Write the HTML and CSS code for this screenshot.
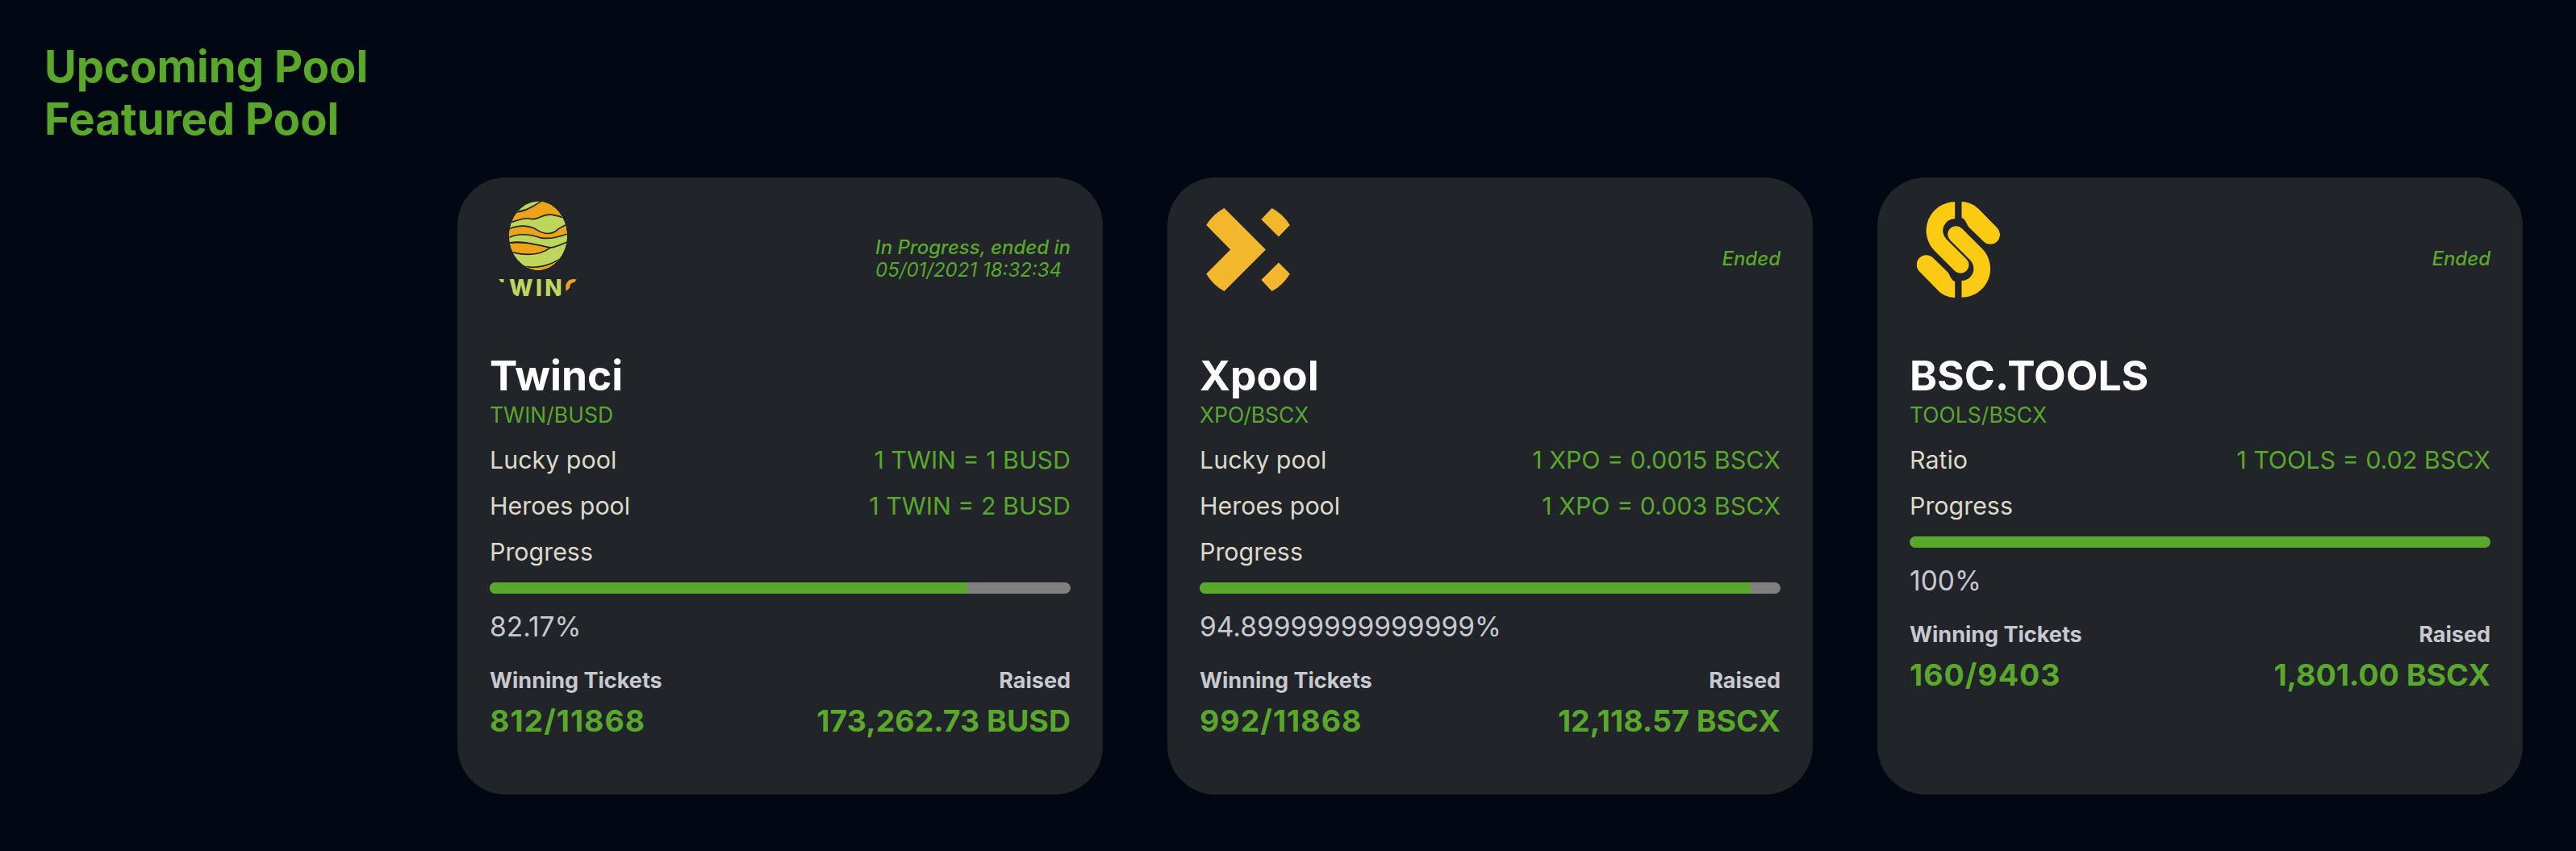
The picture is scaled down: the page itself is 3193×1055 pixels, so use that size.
FILE: index.html
```html
<!DOCTYPE html>
<html lang="en">
<head>
<meta charset="utf-8">
<title>Pools</title>
<link rel="stylesheet" href="styles.css">
</head>
<body>
<main class="page">
  <h1 class="heading">Upcoming Pool</h1>
  <h1 class="heading">Featured Pool</h1>
  <section class="cards">
    <article class="card">
      <header class="card-head">
        <svg class="logo logo-twin" viewBox="50 35 300 365" aria-hidden="true">
          <defs>
            <clipPath id="egg"><ellipse cx="200" cy="170" rx="107" ry="127"/></clipPath>
            <clipPath id="word"><ellipse cx="199" cy="215" rx="178" ry="200"/></clipPath>
          </defs>
          <g clip-path="url(#egg)" stroke="#212429" stroke-width="5">
            <rect x="80" y="30" width="240" height="300" fill="#bdd65b" stroke="none"/>
            <path class="o" d="M100 84C150 82 175 65 215 40L330 40V330H80V84Z"/>
            <path class="g" d="M80 126C120 115 150 100 175 108C200 112 215 88 250 92C270 95 290 100 320 112V330H80Z"/>
            <path class="o" d="M80 150C110 135 150 125 190 145C220 165 250 170 275 145L320 120V330H80Z"/>
            <path class="g" d="M80 185C120 155 170 165 210 178C250 185 290 170 320 160V330H80Z"/>
            <path class="g" d="M80 200C130 185 180 200 245 215C280 210 300 195 320 188V330H80Z"/>
            <path class="o" d="M80 200C130 188 180 200 245 215C210 242 160 245 105 232L80 225Z"/>
            <path class="o" d="M130 280C190 298 250 280 290 250V330H130Z"/>
          </g>
          <g clip-path="url(#word)">
            <text class="word" x="18" y="394">T<tspan x="92">WIN</tspan><tspan class="wordc">C</tspan>I</text>
          </g>
        </svg>
        <p class="status">In Progress, ended in<br><span class="status-date">05/01/2021 18:32:34</span></p>
      </header>
      <h2 class="name">Twinci</h2>
      <p class="pair">TWIN/BUSD</p>
      <div class="row"><span class="label">Lucky pool</span><span class="value">1 TWIN = 1 BUSD</span></div>
      <div class="row"><span class="label">Heroes pool</span><span class="value">1 TWIN = 2 BUSD</span></div>
      <div class="row"><span class="label">Progress</span></div>
      <div class="bar"><div class="fill" style="width:82.17%"></div></div>
      <p class="percent">82.17%</p>
      <div class="stat-labels"><span>Winning Tickets</span><span>Raised</span></div>
      <div class="stat-values"><span>812/11868</span><span>173,262.73 BUSD</span></div>
    </article>
    <article class="card">
      <header class="card-head">
        <svg class="logo logo-xpo" viewBox="75 55 312 310" aria-hidden="true">
          <path d="M75 118Q100 78 142 55L297 210L142 365Q100 342 75 300L165 210Z"/>
          <path d="M280 97L320 55Q362 78 387 118L345 162Z"/>
          <path d="M280 323L345 258L387 300Q362 342 320 365Z"/>
        </svg>
        <p class="status">Ended</p>
      </header>
      <h2 class="name">Xpool</h2>
      <p class="pair">XPO/BSCX</p>
      <div class="row"><span class="label">Lucky pool</span><span class="value">1 XPO = 0.0015 BSCX</span></div>
      <div class="row"><span class="label">Heroes pool</span><span class="value">1 XPO = 0.003 BSCX</span></div>
      <div class="row"><span class="label">Progress</span></div>
      <div class="bar"><div class="fill" style="width:94.9%"></div></div>
      <p class="percent">94.89999999999999%</p>
      <div class="stat-labels"><span>Winning Tickets</span><span>Raised</span></div>
      <div class="stat-values"><span>992/11868</span><span>12,118.57 BSCX</span></div>
    </article>
    <article class="card">
      <header class="card-head">
        <svg class="logo logo-bsc" viewBox="78 45 310 358" aria-hidden="true">
          <path d="M220 46A107 107 0 0 0 144.3 228.7L219 303A31 31 0 0 0 263 259L188.2 184.8A45 45 0 0 1 220 108Z"/>
          <path d="M220 46A107 107 0 0 0 144.3 228.7L219 303A31 31 0 0 0 263 259L188.2 184.8A45 45 0 0 1 220 108Z" transform="rotate(180 232.5 224)"/>
          <path d="M245 45C272 45 295 58 312 76L377.5 142.5A36 36 0 0 1 326.5 193.5L270 138C262 122 255 107 245 105Z"/>
          <path d="M245 45C272 45 295 58 312 76L377.5 142.5A36 36 0 0 1 326.5 193.5L270 138C262 122 255 107 245 105Z" transform="rotate(180 232.5 224)"/>
        </svg>
        <p class="status">Ended</p>
      </header>
      <h2 class="name">BSC.TOOLS</h2>
      <p class="pair">TOOLS/BSCX</p>
      <div class="row"><span class="label">Ratio</span><span class="value">1 TOOLS = 0.02 BSCX</span></div>
      <div class="row"><span class="label">Progress</span></div>
      <div class="bar"><div class="fill" style="width:100%"></div></div>
      <p class="percent">100%</p>
      <div class="stat-labels"><span>Winning Tickets</span><span>Raised</span></div>
      <div class="stat-values"><span>160/9403</span><span>1,801.00 BSCX</span></div>
    </article>
  </section>
</main>
</body>
</html>
```

FILE: styles.css
```css
* { box-sizing: border-box; }
html, body { margin: 0; padding: 0; }
body {
  background: #000814;
  font-family: Inter, "Liberation Sans", sans-serif;
  color: #dcd9c8;
}
.page { padding: 50px 66px 0 55px; }
.heading {
  margin: 0;
  font-size: 54.4px;
  line-height: 65px;
  font-weight: 700;
  color: #5aa82b;
}
.cards {
  display: flex;
  justify-content: flex-end;
  gap: 80px;
  margin-top: 40px;
}
.card {
  width: 800px;
  height: 765px;
  padding: 27px 40px 0;
  background: #212429;
  border-radius: 60px;
}
.card-head {
  display: flex;
  justify-content: space-between;
  align-items: flex-start;
  height: 123px;
}
.logo { display: block; flex: none; }
.logo-twin { width: 100px; height: 122px; margin-left: 10px; }
.logo-twin .o { fill: #eca317; }
.logo-twin .g { fill: #bdd65b; }
.word { font-size: 84px; font-weight: 800; letter-spacing: 10px; fill: #bdd65b; }
.wordc { fill: #eca317; }
.logo-xpo { width: 104px; height: 103px; margin: 11px 0 0 8px; fill: #f3b72e; }
.logo-bsc { width: 103px; height: 119px; margin: 3px 0 0 9px; fill: #fbcb14; }
.status {
  align-self: center;
  margin: 24px 0 0;
  font-size: 24px;
  line-height: 28px;
  font-style: italic;
  font-weight: 500;
  color: #5aa82b;
}
.status-date { font-weight: 400; }
.name {
  margin: 66px 0 0;
  font-size: 51.5px;
  line-height: 58px;
  font-weight: 700;
  color: #fff;
}
.pair {
  margin: 2px 0 0;
  font-size: 26.5px;
  line-height: 36px;
  font-weight: 400;
  color: #5aa82b;
}
.row {
  display: flex;
  justify-content: space-between;
  font-size: 30.4px;
  line-height: 57px;
  font-weight: 400;
}
.pair + .row { margin-top: 10px; }
.value { color: #5aa82b; }
.bar {
  margin-top: 9px;
  height: 14px;
  border-radius: 7px;
  background: #808080;
  overflow: hidden;
}
.fill { height: 100%; background: #5aa82b; }
.percent {
  margin: 17px 0 0;
  font-size: 33.5px;
  line-height: 48px;
  font-weight: 400;
  color: #c8c8d0;
}
.stat-labels {
  display: flex;
  justify-content: space-between;
  margin-top: 23px;
  font-size: 27px;
  line-height: 40px;
  font-weight: 700;
  color: #c8c8d0;
}
.stat-values {
  display: flex;
  justify-content: space-between;
  font-size: 37.5px;
  line-height: 60px;
  font-weight: 700;
  color: #5aa82b;
}
.stat-values span:first-child { letter-spacing: 1px; }
```
